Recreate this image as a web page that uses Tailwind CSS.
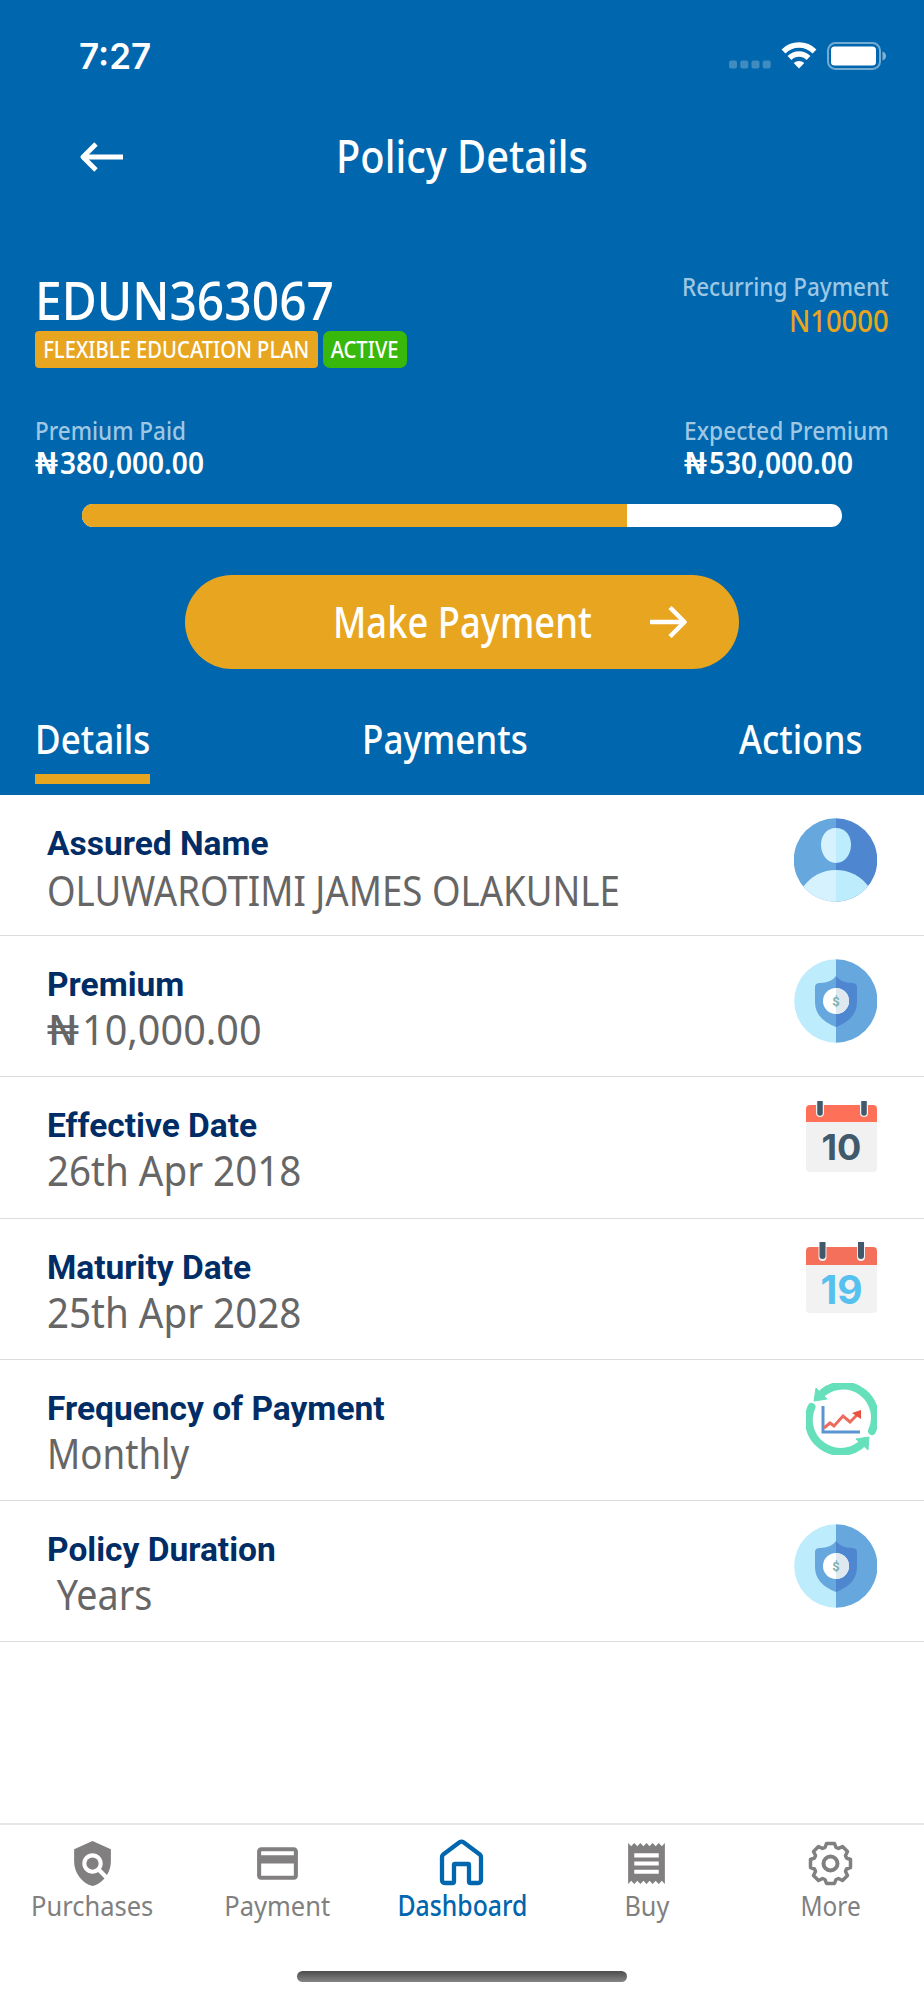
<!DOCTYPE html>
<html lang="en">
  <head>
    <meta charset="UTF-8" />
    <meta name="viewport" content="width=device-width, initial-scale=1.0" />
    <title>Policy Details</title>
    <script src="https://cdn.jsdelivr.net/npm/@tailwindcss/browser@4"></script>
  </head>
  <body class="bg-white">
    <div class="w-[924px] h-[2000px] flex flex-col overflow-hidden font-['Noto_Sans','Open_Sans',sans-serif] whitespace-nowrap">

      <!-- Header -->
      <header class="h-[795px] bg-[#0066ad] text-white shrink-0">

        <!-- Status bar -->
        <div class="h-[112px] flex items-center justify-between pl-[79px] pr-[38px]">
          <span class="font-['Inter',sans-serif] font-semibold text-[35px] leading-none">7:27</span>
          <div class="flex items-center">
            <svg class="w-[42px] h-7 mr-2.5" viewBox="0 0 42 28" fill="#fff" fill-opacity=".25">
              <rect x="0" y="18.5" width="8" height="8" rx="2" />
              <rect x="11.3" y="18.5" width="8" height="8" rx="2" />
              <rect x="22.5" y="18.5" width="8" height="8" rx="2" />
              <rect x="33.7" y="18.5" width="8" height="8" rx="2" />
            </svg>
            <svg class="w-9 h-7 mr-2.5" viewBox="0 0 36 28" fill="none" stroke="#fff" stroke-width="5.5">
              <path d="M2.5 9.5a22 22 0 0 1 31 0" />
              <path d="M8.5 16a13.4 13.4 0 0 1 19 0" />
              <path d="M18 26.5l-5.3-5.4a7.6 7.6 0 0 1 10.6 0z" fill="#fff" stroke="none" />
            </svg>
            <svg class="w-[59px] h-7" viewBox="0 0 59 28">
              <rect x="1" y="1" width="52" height="26" rx="7.5" fill="none" stroke="#fff" stroke-opacity=".45" stroke-width="2" />
              <rect x="4" y="4.5" width="45" height="19" rx="3.5" fill="#fff" />
              <path d="M55.5 9.5q3.5 1.2 3.5 4.5t-3.5 4.5z" fill="#fff" fill-opacity=".5" />
            </svg>
          </div>
        </div>

        <!-- Title bar -->
        <div class="h-[88px] grid grid-cols-3 items-center">
          <svg class="w-11 h-8 ml-20 mt-0.5" viewBox="0 0 44 32" fill="none" stroke="#fff" stroke-width="4.8" stroke-linejoin="round">
            <path d="M43 16H3M16 3L3 16l13 13" />
          </svg>
          <h1 class="text-[45px] leading-[60px] text-center font-medium scale-x-[.885]">Policy Details</h1>
        </div>

        <!-- Plan -->
        <div class="flex justify-between px-[35px] pt-[69px]">
          <div>
            <h2 class="text-[53px] leading-[62px] font-medium origin-left scale-x-[.905]">EDUN363067</h2>
            <div class="flex gap-[5px] text-[23px] leading-[37px] font-medium">
              <div class="w-[283px] flex justify-center bg-[#e8a520] rounded-[4px]"><span class="scale-x-[.88]">FLEXIBLE EDUCATION PLAN</span></div>
              <div class="w-[84px] flex justify-center bg-[#37b80b] rounded-[7px]"><span class="scale-x-[.88]">ACTIVE</span></div>
            </div>
          </div>
          <div class="text-right leading-[34px] font-medium origin-right scale-x-[.9]">
            <p class="text-[25px] text-[#9fc7e3]">Recurring Payment</p>
            <p class="text-[30.5px] text-[#e8a520]">N10000</p>
          </div>
        </div>

        <!-- Premium -->
        <div class="flex justify-between px-[35px] pt-[45px]">
          <div>
            <p class="text-[25px] leading-[34px] font-medium text-[#9fc7e3] w-max origin-left scale-x-[.9]">Premium Paid</p>
            <p class="text-[30px] leading-8 font-semibold flex">
              <span class="w-[25px]"><span class="block w-max origin-left scale-x-[1.33]">₦</span></span>
              <span class="origin-left scale-x-[.935]">380,000.00</span>
            </p>
          </div>
          <div class="w-[205px]">
            <p class="text-[25px] leading-[34px] font-medium text-[#9fc7e3] w-max origin-left scale-x-[.91]">Expected Premium</p>
            <p class="text-[30px] leading-8 font-semibold flex">
              <span class="w-[25px]"><span class="block w-max origin-left scale-x-[1.33]">₦</span></span>
              <span class="origin-left scale-x-[.935]">530,000.00</span>
            </p>
          </div>
        </div>
        <div class="mx-[82px] mt-[25px] h-[23px] rounded-[11px] bg-white overflow-hidden">
          <div class="h-full bg-[#e8a520]" style="width: 71.7%"></div>
        </div>

        <button class="mt-12 mx-auto w-[554px] h-[94px] rounded-full bg-[#e8a520] flex items-center pl-[148px] text-left">
          <span class="w-[257px] text-[43px] leading-[60px] font-medium origin-left scale-x-[.845]">Make Payment</span>
          <svg class="w-[37px] h-8 ml-15" viewBox="0 0 37 32" fill="none" stroke="#fff" stroke-width="4.5" stroke-linejoin="round">
            <path d="M0 16h34M20 1.5L34.500 16 20 30.500" />
          </svg>
        </button>

        <!-- Tabs -->
        <nav class="mt-[45px] pl-[35px] pr-[62px] flex justify-between text-[40px] leading-[50px] font-medium">
          <a class="w-[115px] pb-2.5 border-b-10 border-[#e8a520]"><span class="block origin-left w-max scale-x-[.877]">Details</span></a>
          <a class="w-[165px]"><span class="block origin-left w-max scale-x-[.877]">Payments</span></a>
          <a class="w-[123px]"><span class="block origin-left w-max scale-x-[.877]">Actions</span></a>
        </nav>
      </header>

      <!-- Detail rows -->
      <main class="flex-1">
        <div class="h-[141.2px] flex justify-between items-start px-[47px] border-b border-[#dcdcdc]">
          <div class="pt-[33px]">
            <h3 class="font-[Roboto,sans-serif] font-bold text-[33.5px] leading-8 text-[#002d66]">Assured Name</h3>
            <p class="mt-[5px] text-[41px] leading-[50px] text-[#666] w-max origin-left scale-x-[.893]">OLUWAROTIMI JAMES OLAKUNLE</p>
          </div>
          <svg class="w-[83px] h-[84px] mt-[23px]" viewBox="0 0 83 84">
            <clipPath id="avatarClip"><circle cx="41.5" cy="42" r="41.8" /></clipPath>
            <g clip-path="url(#avatarClip)">
              <path d="M0 0h42v84H0z" fill="#66a8de" />
              <path d="M42 0h42v84H42z" fill="#4f86d0" />
              <path d="M9 69Q22 52 42 52V84H9z" fill="#d6f2fe" />
              <path d="M75 69Q62 52 42 52V84H75z" fill="#bdecfd" />
              <path d="M42 10C32 10 27 18 27 27s6 18 15 18z" fill="#d6f2fe" />
              <path d="M42 10c10 0 15 8 15 17s-6 18-15 18z" fill="#bdecfd" />
            </g>
          </svg>
        </div>

        <div class="h-[141.2px] flex justify-between items-start px-[47px] border-b border-[#dcdcdc]">
          <div class="pt-[33px]">
            <h3 class="font-[Roboto,sans-serif] font-bold text-[33.5px] leading-8 text-[#002d66]">Premium</h3>
            <p class="mt-[3px] text-[41px] leading-[50px] text-[#666] flex">
              <span class="w-[35px]"><span class="block w-max origin-left scale-x-[1.36]">₦</span></span>
              <span class="origin-left scale-x-[.965]">10,000.00</span>
            </p>
          </div>
          <svg class="w-[83px] h-[84px] mt-[23px]" viewBox="0 0 83 84">
            <path d="M42 .2a41.8 41.8 0 0 0 0 83.6z" fill="#bdecfd" />
            <path d="M42 .2a41.5 41.8 0 0 1 0 83.6z" fill="#66a8de" />
            <path d="M42 17q-5 7-16 7-5 0-5 4v15q0 17 21 25z" fill="#66a8de" />
            <path d="M42 17q5 7 16 7 5 0 5 4v15q0 17-21 25z" fill="#4f86d0" />
            <circle cx="42" cy="42" r="13" fill="#fff" />
            <path d="M42 29a13 13 0 0 1 0 26z" fill="#dfe8ef" />
            <text x="42" y="46.5" font-family="Roboto" font-size="13" font-weight="700" text-anchor="middle" fill="#7fb0ae">$</text>
          </svg>
        </div>

        <div class="h-[141.2px] flex justify-between items-start px-[47px] border-b border-[#dcdcdc]">
          <div class="pt-[33px]">
            <h3 class="font-[Roboto,sans-serif] font-bold text-[33.5px] leading-8 text-[#002d66]">Effective Date</h3>
            <p class="mt-[3px] text-[41px] leading-[50px] text-[#666] w-max origin-left scale-x-[.94]">26th Apr 2018</p>
          </div>
          <svg class="w-[71px] h-[71px] mt-6" viewBox="0 0 71 71">
            <path d="M0 21h71v46q0 4-4 4H4q-4 0-4-4z" fill="#f1f1f1" />
            <path d="M0 21V8q0-4 4-4h63q4 0 4 4v13z" fill="#ff7058" />
            <path d="M14 4v8M58 4v8" stroke="#f1f1f1" stroke-width="8" stroke-linecap="round" />
            <path d="M14 0v12M58 0v12" stroke="#40596b" stroke-width="5.5" stroke-linecap="round" />
            <text x="35.5" y="59" font-family="Inter" font-size="36" font-weight="700" text-anchor="middle" fill="#40596b">10</text>
          </svg>
        </div>

        <div class="h-[141.2px] flex justify-between items-start px-[47px] border-b border-[#dcdcdc]">
          <div class="pt-[33px]">
            <h3 class="font-[Roboto,sans-serif] font-bold text-[33.5px] leading-8 text-[#002d66]">Maturity Date</h3>
            <p class="mt-[3px] text-[41px] leading-[50px] text-[#666] w-max origin-left scale-x-[.94]">25th Apr 2028</p>
          </div>
          <svg class="w-[71px] h-[71px] mt-[23px]" viewBox="0 0 71 71">
            <path d="M0 23h71v44q0 4-4 4H4q-4 0-4-4z" fill="#f2f2f2" />
            <path d="M0 23V9q0-4 4-4h63q4 0 4 4v14z" fill="#f4705b" />
            <path d="M16.5 6v9M55 6v9" stroke="#f2f2f2" stroke-width="8" stroke-linecap="round" />
            <path d="M16.5 0v14M55 0v14" stroke="#40596b" stroke-width="6" stroke-linecap="round" />
            <text x="35.5" y="61.5" font-family="Inter" font-size="39" font-weight="700" text-anchor="middle" fill="#56c1ee">19</text>
          </svg>
        </div>

        <div class="h-[141.2px] flex justify-between items-start px-[47px] border-b border-[#dcdcdc]">
          <div class="pt-[33px]">
            <h3 class="font-[Roboto,sans-serif] font-bold text-[33.5px] leading-8 text-[#002d66]">Frequency of Payment</h3>
            <p class="mt-[3px] text-[41px] leading-[50px] text-[#666] w-max origin-left scale-x-[.895]">Monthly</p>
          </div>
          <svg class="w-[71px] h-[72px] mt-[23px]" viewBox="0 0 71 72" fill="none">
            <path d="M17 9.5A32 32 0 0 1 66 48" stroke="#66e0bb" stroke-width="8" stroke-linecap="round" />
            <path d="M54 62.5A32 32 0 0 1 5.5 24" stroke="#66e0bb" stroke-width="8" stroke-linecap="round" />
            <path d="M10 5L21 16 8 18zM62 67L50 56l13-2z" fill="#66e0bb" stroke="#66e0bb" stroke-linejoin="round" />
            <path d="M17 23v26h37" stroke="#5b95d2" stroke-width="3" />
            <path d="M18 45l6-5 4 3 9-10 7 6 8-8" stroke="#ee6a5c" stroke-width="3" />
            <path d="M46 30l9-3v9z" fill="#e8503f" />
          </svg>
        </div>

        <div class="h-[141.2px] flex justify-between items-start px-[47px] border-b border-[#dcdcdc]">
          <div class="pt-[33px]">
            <h3 class="font-[Roboto,sans-serif] font-bold text-[33.5px] leading-8 text-[#002d66]">Policy Duration</h3>
            <p class="mt-[3px] text-[41px] leading-[50px] text-[#666] w-max origin-left scale-x-[.92]">&nbsp;Years</p>
          </div>
          <svg class="w-[83px] h-[84px] mt-[23px]" viewBox="0 0 83 84">
            <path d="M42 .2a41.8 41.8 0 0 0 0 83.6z" fill="#bdecfd" />
            <path d="M42 .2a41.5 41.8 0 0 1 0 83.6z" fill="#66a8de" />
            <path d="M42 17q-5 7-16 7-5 0-5 4v15q0 17 21 25z" fill="#66a8de" />
            <path d="M42 17q5 7 16 7 5 0 5 4v15q0 17-21 25z" fill="#4f86d0" />
            <circle cx="42" cy="42" r="13" fill="#fff" />
            <path d="M42 29a13 13 0 0 1 0 26z" fill="#dfe8ef" />
            <text x="42" y="46.5" font-family="Roboto" font-size="13" font-weight="700" text-anchor="middle" fill="#7fb0ae">$</text>
          </svg>
        </div>
      </main>

      <!-- Bottom navigation -->
      <nav class="h-[177px] shrink-0 border-t-2 border-[#e6e6e6] pt-3.5 grid grid-cols-5 content-start text-[28px] leading-[34px] text-[#808080]">
        <a class="flex flex-col items-center">
          <svg class="size-[49px]" viewBox="0 0 24 24" fill="#817f80">
            <path d="M21 5l-9-4-9 4v6c0 5.55 3.84 10.74 9 12 2.3-.56 4.33-1.9 5.88-3.71l-3.12-3.12c-1.94 1.29-4.58 1.07-6.29-.64-1.95-1.95-1.95-5.12 0-7.07 1.95-1.95 5.12-1.95 7.07 0 1.71 1.71 1.92 4.35.64 6.29l2.9 2.9C20.29 15.69 21 13.38 21 11V5z" />
            <circle cx="12" cy="12" r="3" />
          </svg>
          <span class="scale-x-[.91]">Purchases</span>
        </a>
        <a class="flex flex-col items-center">
          <svg class="size-[49px]" viewBox="0 0 24 24" fill="#817f80">
            <path d="M20 4H4c-1.11 0-1.99.89-1.99 2L2 18c0 1.11.89 2 2 2h16c1.11 0 2-.89 2-2V6c0-1.11-.89-2-2-2zm0 14H4v-6h16v6zm0-10H4V6h16v2z" />
          </svg>
          <span class="scale-x-[.91]">Payment</span>
        </a>
        <a class="flex flex-col items-center text-[#0066ad] font-medium">
          <svg class="size-[49px]" viewBox="0 0 49 49" fill="none" stroke="#0066ad" stroke-width="4.3" stroke-linejoin="round">
            <path d="M5 18.5q0-2 1.5-3.3L22.5 3.3q2-1.3 4 0L42.5 15.2q1.5 1.3 1.5 3.3V41q0 3-3 3h-7.5q-1.500 0-1.500-1.500V26q0-1-1-1h-13q-1 0-1 1v16.500q0 1.500-1.500 1.500H8q-3 0-3-3z" />
          </svg>
          <span class="scale-x-[.885]">Dashboard</span>
        </a>
        <a class="flex flex-col items-center">
          <svg class="size-[49px]" viewBox="0 0 24 24" fill="#817f80">
            <path d="M18 17H6v-2h12v2zm0-4H6v-2h12v2zm0-4H6V7h12v2zM3 22l1.5-1.5L6 22l1.5-1.5L9 22l1.5-1.5L12 22l1.5-1.5L15 22l1.5-1.5L18 22l1.5-1.5L21 22V2l-1.5 1.5L18 2l-1.5 1.5L15 2l-1.5 1.5L12 2l-1.5 1.5L9 2 7.5 3.5 6 2 4.5 3.5 3 2v20z" />
          </svg>
          <span class="scale-x-[.9]">Buy</span>
        </a>
        <a class="flex flex-col items-center -ml-0.5">
          <svg class="size-[49px]" viewBox="-24.5 -24.5 49 49" fill="none" stroke="#817f80" stroke-width="3.5" stroke-linejoin="round">
            <path d="M-4-20H4L5.5-16 8-15 12-17 17-12 15-8 16-5.5 20-4V4L16 5.5 15 8 17 12 12 17 8 15 5.5 16 4 20H-4L-5.5 16-8 15-12 17-17 12-15 8-16 5.5-20 4V-4L-16-5.5-15-8-17-12-12-17-8-15-5.5-16z" />
            <circle r="7" stroke-width="4" />
          </svg>
          <span class="scale-x-[.87]">More</span>
        </a>
        <div class="col-span-5 mt-[49px] mx-auto w-[330px] h-[11px] rounded-full bg-linear-to-b from-[#4d4d4d] to-[#858585]"></div>
      </nav>
    </div>
  </body>
</html>
